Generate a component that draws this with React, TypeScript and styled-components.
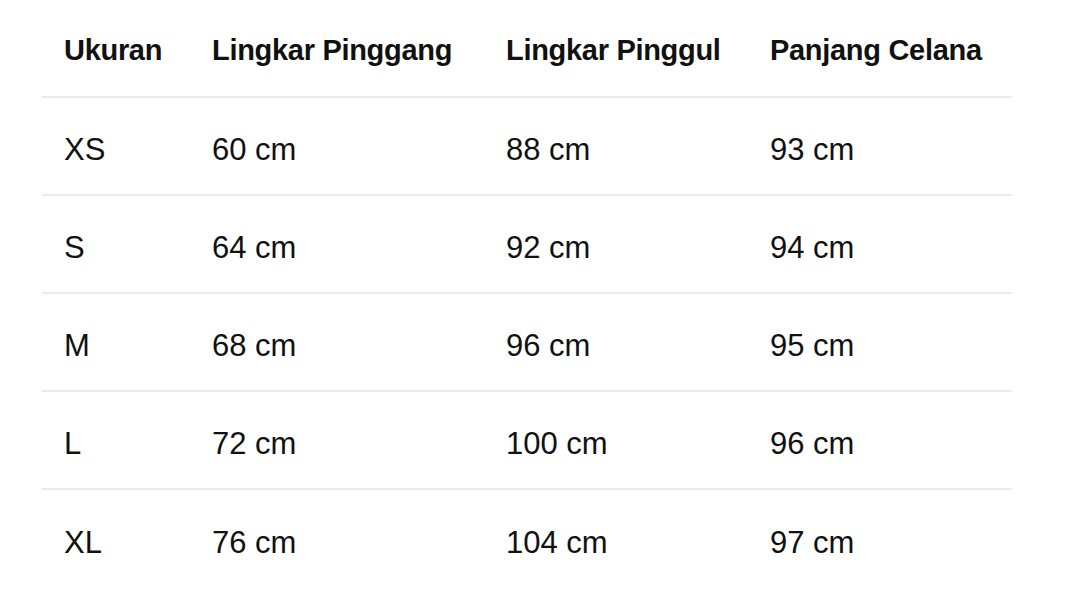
import React from 'react';
import styled, { createGlobalStyle } from 'styled-components';

const GlobalStyle = createGlobalStyle`
  html, body {
    margin: 0;
    padding: 0;
    background: #ffffff;
  }
  body {
    font-family: "Liberation Sans", Arial, sans-serif;
    color: #111111;
  }
`;

const Page = styled.div`
  width: 1080px;
  height: 612px;
  padding: 0 68px 0 42px;
  box-sizing: border-box;
`;

const Table = styled.div`
  display: grid;
  grid-template-columns: 148px 294px 264px 264px;
  width: 970px;
`;

const Row = styled.div<{ $last?: boolean }>`
  display: contents;

  & > div {
    border-bottom: ${({ $last }) => ($last ? 'none' : '2px solid #ebebeb')};
  }
`;

const HeadCell = styled.div`
  height: 98px;
  display: flex;
  align-items: center;
  padding: 4px 0 0 22px;
  box-sizing: border-box;
  font-size: 29px;
  font-weight: 700;
  letter-spacing: -0.3px;
  white-space: nowrap;
`;

const Cell = styled.div`
  height: 98px;
  display: flex;
  align-items: center;
  padding: 8px 0 0 22px;
  box-sizing: border-box;
  font-size: 31px;
  white-space: nowrap;
`;

const headers = ['Ukuran', 'Lingkar Pinggang', 'Lingkar Pinggul', 'Panjang Celana'];

const rows = [
  ['XS', '60 cm', '88 cm', '93 cm'],
  ['S', '64 cm', '92 cm', '94 cm'],
  ['M', '68 cm', '96 cm', '95 cm'],
  ['L', '72 cm', '100 cm', '96 cm'],
  ['XL', '76 cm', '104 cm', '97 cm'],
];

const App: React.FC = () => {
  return (
    <>
      <GlobalStyle />
      <Page>
        <Table>
          <Row>
            {headers.map((h) => (
              <HeadCell key={h}>{h}</HeadCell>
            ))}
          </Row>
          {rows.map((r, i) => (
            <Row key={r[0]} $last={i === rows.length - 1}>
              {r.map((v, j) => (
                <Cell key={j}>{v}</Cell>
              ))}
            </Row>
          ))}
        </Table>
      </Page>
    </>
  );
};

export default App;
